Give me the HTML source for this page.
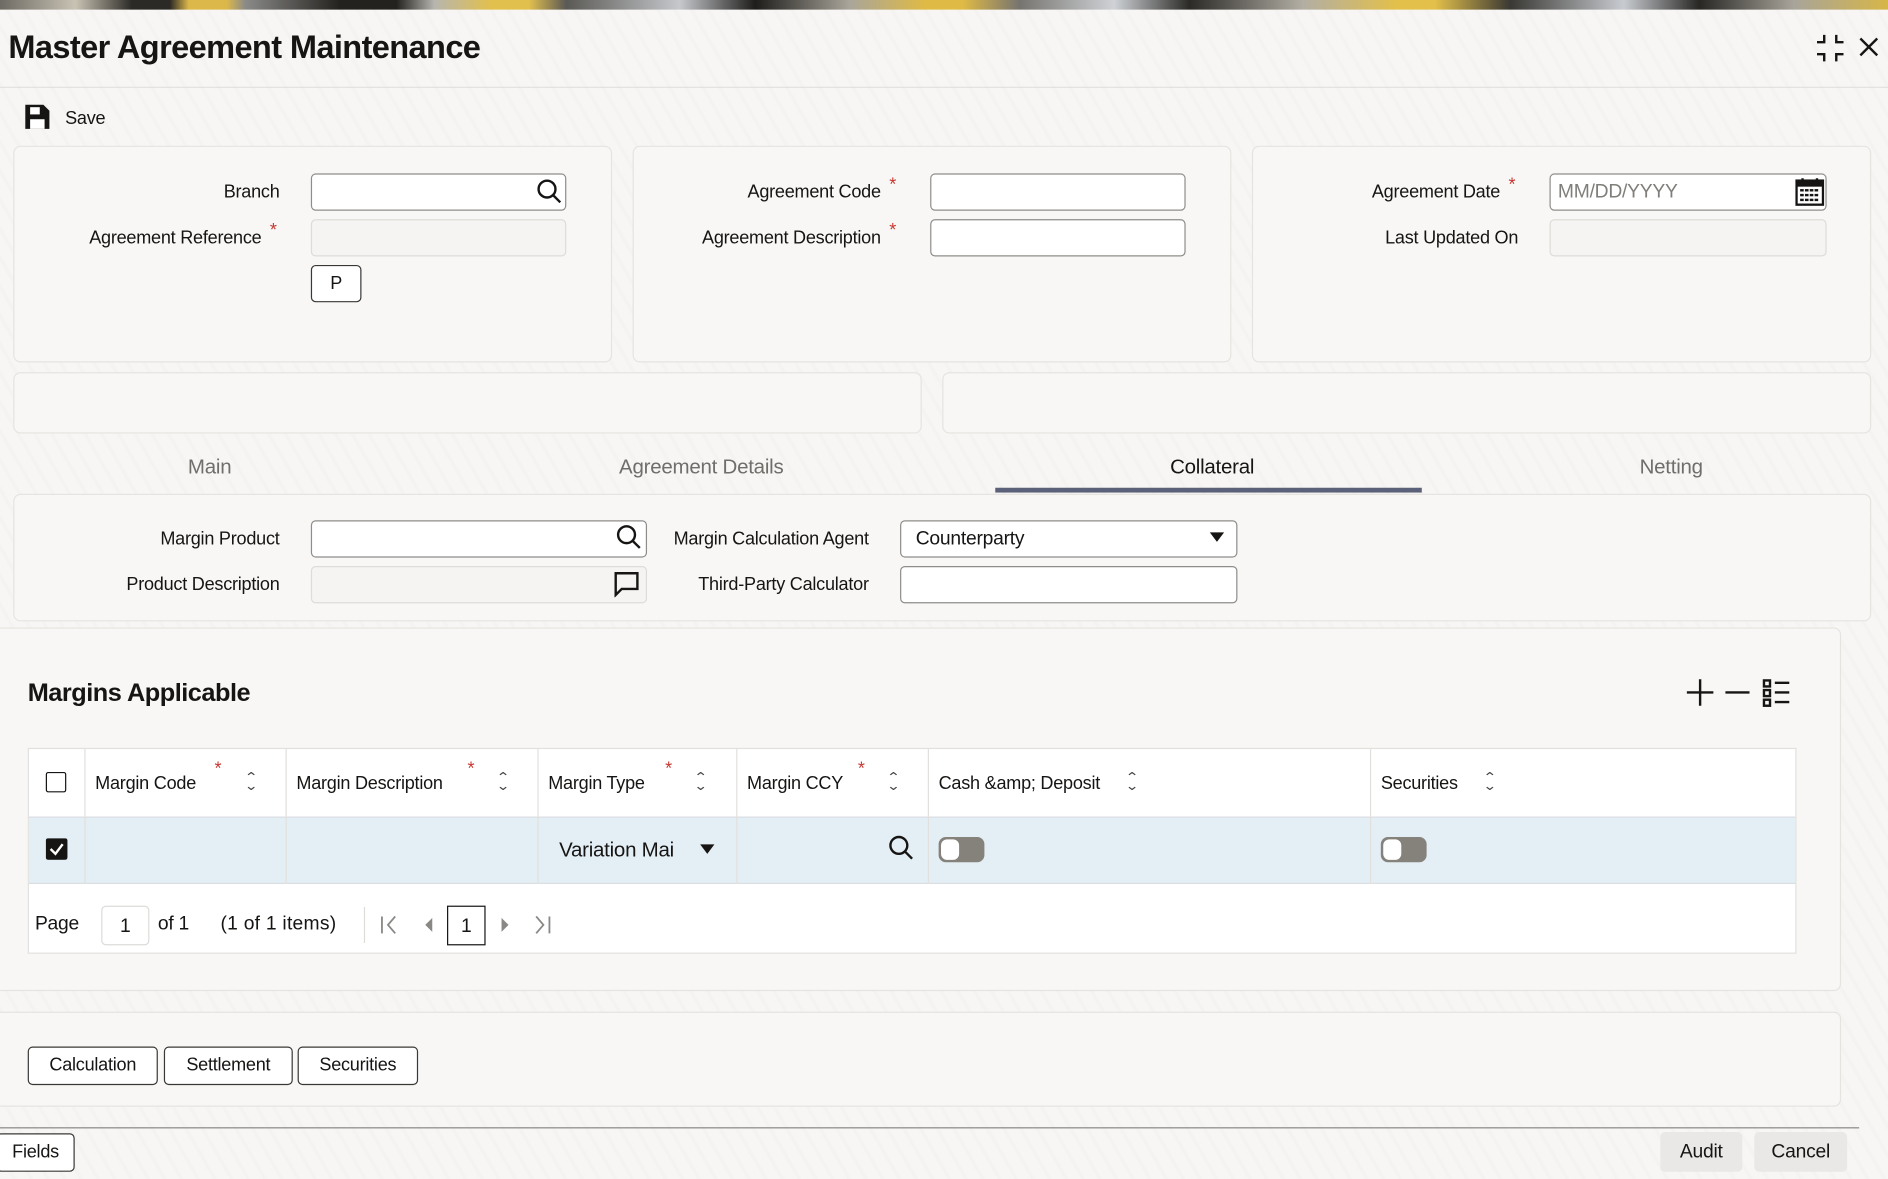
<!DOCTYPE html>
<html><head><meta charset="utf-8"><style>
html,body{margin:0;padding:0;width:1888px;height:1179px;overflow:hidden;background:#f6f5f3}
#w{position:absolute;left:0;top:0;width:1567px;height:979px;transform:scale(1.2049,1.2043);transform-origin:0 0;font-family:"Liberation Sans",sans-serif;color:#161513;font-size:15px;letter-spacing:-0.2px;
background:#f7f6f4 repeating-linear-gradient(60deg,rgba(0,0,0,0) 0 9px,rgba(0,0,0,0.012) 9px 12px)}
.a{position:absolute;white-space:nowrap}
.l{position:absolute;white-space:nowrap;line-height:20px;margin-top:1px}
.p{position:absolute;background:#f8f7f5;border:1px solid #e6e4e1;border-radius:6px;box-sizing:border-box}
.i{position:absolute;background:#fff;border:1px solid #8f8d8a;border-radius:4px;box-sizing:border-box}
.d{position:absolute;background:#f5f4f2;border:1px solid #dedcd9;border-radius:4px;box-sizing:border-box}
.s{color:#c7372f;font-size:15px}
.b{position:absolute;border:1px solid #3a3835;border-radius:4px;background:#fff;box-sizing:border-box;text-align:center;line-height:30px;font-size:15px}
.tab{position:absolute;top:378px;font-size:17px;color:#6f6e6b;transform:translateX(-50%)}
.vl{position:absolute;top:622px;width:1px;height:112px;background:#e2e0dd}
.srt{position:absolute;font-size:11px;line-height:7px;color:#444;transform:scaleX(1.3)}
</style></head><body><div id="w">
<div class="a" style="left:0;top:0;width:1567px;height:8px;background:linear-gradient(90deg,#6d6a63 0,#c9c3b4 4%,#2c2a26 7%,#2c2a26 9%,#dcb84a 10%,#dcb84a 12%,#8a8a88 13%,#24221f 18%,#24221f 21%,#b7b5ae 23%,#e2c04e 26%,#e2c04e 28%,#5a5955 30%,#c6c8cc 36%,#1e1d1b 40%,#a9a59a 45%,#dfba45 49%,#dfba45 51%,#767470 54%,#cfd2d6 59%,#2b2a27 63%,#b2aea4 69%,#e3c04a 74%,#e3c04a 76%,#393834 80%,#c8cbd0 86%,#282724 90%,#a8a49a 95%,#d7b647 100%)"></div>
<div class="a" style="left:7px;top:24px;font-size:27px;font-weight:bold;letter-spacing:-0.5px">Master Agreement Maintenance</div>
<svg class="a" style="left:1507px;top:28px" width="24" height="24" viewBox="0 0 24 24" fill="none" stroke="#161513" stroke-width="2"><path d="M7 1v6H1M17 1v6h6M7 23v-6H1M17 23v-6h6"/></svg>
<svg class="a" style="left:1543px;top:31px" width="16" height="16" viewBox="0 0 16 16" stroke="#161513" stroke-width="2"><path d="M1 1l14 14M15 1L1 15"/></svg>
<div class="a" style="left:0;top:72px;width:1567px;height:1px;background:#e3e1de"></div>
<svg class="a" style="left:20px;top:86px" width="22" height="22" viewBox="0 0 22 22"><path d="M1 1h15l5 5v15H1z" fill="#161513"/><rect x="5" y="3" width="8" height="6" fill="#fff"/><rect x="5" y="13" width="12" height="8" fill="#fff"/></svg>
<div class="l" style="left:54px;top:88px">Save</div>

<div class="p" style="left:11px;top:121px;width:497px;height:180px"></div>
<div class="p" style="left:525px;top:121px;width:497px;height:180px"></div>
<div class="p" style="left:1039px;top:121px;width:514px;height:180px"></div>
<div class="l" style="right:1335px;top:149px">Branch</div>
<div class="i" style="left:258px;top:144px;width:212px;height:31px"></div>
<svg class="a" style="left:445px;top:148px" width="22" height="22" viewBox="0 0 22 22" fill="none" stroke="#161513" stroke-width="2"><circle cx="9" cy="9" r="7"/><path d="M14 14l6 6"/></svg>
<div class="l" style="right:1350px;top:187px">Agreement Reference</div><div class="a s" style="left:224px;top:183px">*</div>
<div class="d" style="left:258px;top:182px;width:212px;height:31px"></div>
<div class="b" style="left:258px;top:220px;width:42px;height:31px">P</div>
<div class="l" style="right:836px;top:149px">Agreement Code</div><div class="a s" style="left:738px;top:145px">*</div>
<div class="i" style="left:772px;top:144px;width:212px;height:31px"></div>
<div class="l" style="right:836px;top:187px">Agreement Description</div><div class="a s" style="left:738px;top:183px">*</div>
<div class="i" style="left:772px;top:182px;width:212px;height:31px"></div>
<div class="l" style="right:322px;top:149px">Agreement Date</div><div class="a s" style="left:1252px;top:145px">*</div>
<div class="i" style="left:1286px;top:144px;width:230px;height:31px"></div>
<div class="l" style="left:1293px;top:149px;color:#807e7a;font-size:16px">MM/DD/YYYY</div>
<svg class="a" style="left:1490px;top:147px" width="24" height="24" viewBox="0 0 24 24"><rect x="1" y="3" width="22" height="20" fill="none" stroke="#161513" stroke-width="2"/><rect x="1" y="3" width="22" height="5" fill="#161513"/><path d="M6 1v4M18 1v4" stroke="#161513" stroke-width="2"/><g fill="#161513"><rect x="4" y="10" width="3" height="2"/><rect x="8" y="10" width="3" height="2"/><rect x="12" y="10" width="3" height="2"/><rect x="16" y="10" width="3" height="2"/><rect x="4" y="14" width="3" height="2"/><rect x="8" y="14" width="3" height="2"/><rect x="12" y="14" width="3" height="2"/><rect x="16" y="14" width="3" height="2"/><rect x="4" y="18" width="3" height="2"/><rect x="8" y="18" width="3" height="2"/><rect x="12" y="18" width="3" height="2"/><rect x="16" y="18" width="3" height="2"/></g></svg>
<div class="l" style="right:307px;top:187px">Last Updated On</div>
<div class="d" style="left:1286px;top:182px;width:230px;height:31px"></div>

<div class="p" style="left:11px;top:309px;width:754px;height:51px"></div>
<div class="p" style="left:782px;top:309px;width:771px;height:51px"></div>

<div class="tab" style="left:174px">Main</div>
<div class="tab" style="left:582px">Agreement Details</div>
<div class="tab" style="left:1006px;color:#161513">Collateral</div>
<div class="tab" style="left:1387px">Netting</div>
<div class="p" style="left:11px;top:410px;width:1542px;height:106px"></div>
<div class="a" style="left:826px;top:405px;width:354px;height:4px;background:#5b6178"></div>
<div class="l" style="right:1335px;top:437px">Margin Product</div>
<div class="i" style="left:258px;top:432px;width:279px;height:31px"></div>
<svg class="a" style="left:511px;top:435px" width="22" height="22" viewBox="0 0 22 22" fill="none" stroke="#161513" stroke-width="2"><circle cx="9" cy="9" r="7"/><path d="M14 14l6 6"/></svg>
<div class="l" style="right:1335px;top:475px">Product Description</div>
<div class="d" style="left:258px;top:470px;width:279px;height:31px"></div>
<svg class="a" style="left:509px;top:474px" width="22" height="22" viewBox="0 0 22 22" fill="none" stroke="#161513" stroke-width="2"><path d="M2 2h18v13H7l-5 5z"/></svg>
<div class="l" style="right:846px;top:437px">Margin Calculation Agent</div>
<div class="i" style="left:747px;top:432px;width:280px;height:31px"></div>
<div class="l" style="left:760px;top:437px;font-size:16px">Counterparty</div>
<svg class="a" style="left:1004px;top:442px" width="12" height="8"><path d="M0 0h12L6 8z" fill="#161513"/></svg>
<div class="l" style="right:846px;top:475px">Third-Party Calculator</div>
<div class="i" style="left:747px;top:470px;width:280px;height:31px"></div>

<div class="p" style="left:-6px;top:521px;width:1534px;height:302px"></div>
<div class="a" style="left:23px;top:564px;font-size:21px;font-weight:bold;letter-spacing:-0.4px">Margins Applicable</div>
<svg class="a" style="left:1398px;top:562px" width="92" height="26" viewBox="0 0 92 26" stroke="#161513" stroke-width="2" fill="none"><path d="M13 2v22M2 13h22M34 13h20"/><rect x="66" y="3" width="5" height="5"/><rect x="66" y="11" width="5" height="5"/><rect x="66" y="19" width="5" height="5"/><path d="M75 5h12M75 13h12M75 21h12"/></svg>
<div class="a" style="left:23px;top:621px;width:1468px;height:171px;background:#fff;border:1px solid #e2e0dd;box-sizing:border-box"></div>
<div class="a" style="left:24px;top:678px;width:1466px;height:56px;background:#e4eff5;border-top:1px solid #d9dee2;border-bottom:1px solid #d9dee2;box-sizing:border-box"></div>
<div class="vl" style="left:70px"></div><div class="vl" style="left:237px"></div><div class="vl" style="left:446px"></div><div class="vl" style="left:611px"></div><div class="vl" style="left:770px"></div><div class="vl" style="left:1137px"></div>
<div class="a" style="left:38px;top:641px;width:15px;height:15px;border:1.5px solid #161513;border-radius:2px"></div>
<div class="l" style="left:79px;top:640px">Margin Code</div><div class="a s" style="left:178px;top:630px">*</div><div class="srt" style="left:204px;top:643px">⌃<br>⌄</div>
<div class="l" style="left:246px;top:640px">Margin Description</div><div class="a s" style="left:388px;top:630px">*</div><div class="srt" style="left:413px;top:643px">⌃<br>⌄</div>
<div class="l" style="left:455px;top:640px">Margin Type</div><div class="a s" style="left:552px;top:630px">*</div><div class="srt" style="left:577px;top:643px">⌃<br>⌄</div>
<div class="l" style="left:620px;top:640px">Margin CCY</div><div class="a s" style="left:712px;top:630px">*</div><div class="srt" style="left:737px;top:643px">⌃<br>⌄</div>
<div class="l" style="left:779px;top:640px">Cash &amp;amp; Deposit</div><div class="srt" style="left:935px;top:643px">⌃<br>⌄</div>
<div class="l" style="left:1146px;top:640px">Securities</div><div class="srt" style="left:1232px;top:643px">⌃<br>⌄</div>
<svg class="a" style="left:38px;top:696px" width="18" height="18"><rect width="18" height="18" rx="2" fill="#161513"/><path d="M4 9l4 4 6-8" stroke="#fff" stroke-width="2" fill="none"/></svg>
<div class="l" style="left:464px;top:695px;font-size:17px">Variation Mai</div>
<svg class="a" style="left:581px;top:701px" width="12" height="8"><path d="M0 0h12L6 8z" fill="#161513"/></svg>
<svg class="a" style="left:737px;top:693px" width="22" height="22" viewBox="0 0 22 22" fill="none" stroke="#161513" stroke-width="2"><circle cx="9" cy="9" r="7"/><path d="M14 14l6 6"/></svg>
<div class="a" style="left:779px;top:695px;width:38px;height:21px;background:#85817b;border-radius:6px"><div style="position:absolute;left:2px;top:2px;width:15px;height:17px;background:#fff;border-radius:5px"></div></div>
<div class="a" style="left:1146px;top:695px;width:38px;height:21px;background:#85817b;border-radius:6px"><div style="position:absolute;left:2px;top:2px;width:15px;height:17px;background:#fff;border-radius:5px"></div></div>
<div class="l" style="left:29px;top:757px;font-size:16px">Page</div>
<div class="a" style="left:84px;top:752px;width:40px;height:33px;border:1px solid #dedcd9;border-radius:4px;box-sizing:border-box;text-align:center;line-height:33px;font-size:16px">1</div>
<div class="l" style="left:131px;top:757px;font-size:16px">of 1</div>
<div class="l" style="left:183px;top:757px;font-size:16px;letter-spacing:0.2px">(1 of 1 items)</div>
<div class="a" style="left:302px;top:753px;width:1px;height:30px;background:#dedcd9"></div>
<svg class="a" style="left:315px;top:760px" width="150" height="16" viewBox="0 0 150 16" fill="none" stroke="#8a8884" stroke-width="1.5"><path d="M2 1v14M13 1L7 8l6 7"/><path d="M43 4l-4 4 4 4z" fill="#8a8884"/><path d="M102 4l4 4-4 4z" fill="#8a8884"/><path d="M130 1l6 7-6 7M141 1v14"/></svg>
<div class="a" style="left:371px;top:752px;width:32px;height:33px;border:1.5px solid #161513;box-sizing:border-box;text-align:center;line-height:33px;font-size:16px">1</div>

<div class="p" style="left:-6px;top:840px;width:1534px;height:79px"></div>
<div class="b" style="left:23px;top:869px;width:108px;height:32px">Calculation</div>
<div class="b" style="left:136px;top:869px;width:107px;height:32px">Settlement</div>
<div class="b" style="left:247px;top:869px;width:100px;height:32px">Securities</div>
<div class="a" style="left:0;top:936px;width:1543px;height:1px;background:#8a8884"></div>
<div class="b" style="left:-3px;top:941px;width:65px;height:32px">Fields</div>
<div class="a" style="left:1378px;top:940px;width:68px;height:33px;background:#e9e8e6;border-radius:4px;text-align:center;line-height:34px;font-size:16px">Audit</div>
<div class="a" style="left:1456px;top:940px;width:77px;height:33px;background:#e9e8e6;border-radius:4px;text-align:center;line-height:34px;font-size:16px">Cancel</div>
</div></body></html>
